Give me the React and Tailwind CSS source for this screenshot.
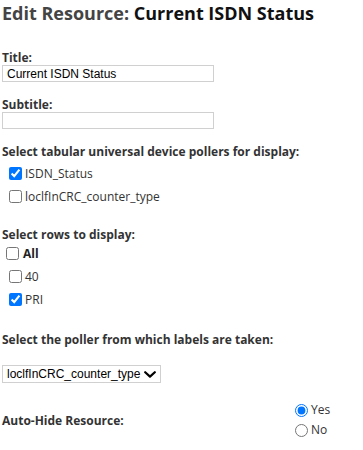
import React from "react";

function Chevron() {
  return (
    <svg width="12" height="7" viewBox="0 0 12 7" className="shrink-0">
      <path d="M1.2 1.2 L6 5.6 L10.8 1.2" fill="none" stroke="#000" strokeWidth="2.2" strokeLinecap="round" strokeLinejoin="round" />
    </svg>
  );
}

function Label({ children, className = "" }) {
  return (
    <div className={"text-[12px] leading-[15px] font-bold text-[#333] whitespace-nowrap " + className}>{children}</div>
  );
}

function CheckRow({ label, checked, bold, className = "" }) {
  return (
    <label className={"flex items-center h-[23px] " + className}>
      <input type="checkbox" defaultChecked={checked} className="w-[13px] h-[13px] shrink-0" />
      <span className={"text-[12px] leading-[16px] " + (bold ? "font-bold ml-[4px] text-[#222]" : "ml-[3px] text-[#333]")}>{label}</span>
    </label>
  );
}

export default function App() {
  return (
    <div className="w-[363px] h-[450px] bg-white px-[2px] pt-[1px] overflow-hidden" style={{ fontFamily: '"Open Sans", "Liberation Sans", sans-serif' }}>
      <h1 className="text-[18px] leading-[24px] font-bold whitespace-nowrap">
        <span className="text-[#444]">Edit Resource: </span>
        <span className="text-[#111]">Current ISDN Status</span>
      </h1>

      <Label className="mt-[25px]">Title:</Label>
      <input
        type="text"
        defaultValue="Current ISDN Status"
        className="block w-[212px] h-[17px] border border-[#d0d0d0] px-[4px] text-[12px] text-black outline-none"
        style={{ fontFamily: '"Liberation Sans", Arial, sans-serif' }}
      />

      <Label className="mt-[15px]">Subtitle:</Label>
      <input
        type="text"
        className="block w-[212px] h-[17px] border border-[#d0d0d0] px-[4px] text-[12px] text-black outline-none"
        style={{ fontFamily: '"Liberation Sans", Arial, sans-serif' }}
      />

      <Label className="mt-[15px]">Select tabular universal device pollers for display:</Label>
      <div className="mt-[3px] pl-[7px]">
        <CheckRow label="ISDN_Status" checked />
        <CheckRow label="loclfInCRC_counter_type" />
      </div>

      <Label className="mt-[19px]">Select rows to display:</Label>
      <div className="pl-[4px]">
        <CheckRow label="All" bold />
        <CheckRow label="40" className="pl-[3px]" />
        <CheckRow label="PRI" checked className="pl-[3px]" />
      </div>

      <Label className="mt-[21px]">Select the poller from which labels are taken:</Label>
      <div
        className="mt-[18px] flex items-center justify-between w-[159px] h-[18px] border border-[#d0d0d0] pl-[4px] pr-[4px] text-[12px] leading-[16px] text-black"
        style={{ fontFamily: '"Liberation Sans", Arial, sans-serif' }}
      >
        <span>loclfInCRC_counter_type</span>
        <Chevron />
      </div>

      <div className="mt-[17px] flex items-center">
        <Label className="w-[293px] shrink-0">Auto-Hide Resource:</Label>
        <div className="flex flex-col">
          <label className="flex items-center h-[20px]">
            <input type="radio" name="autohide" defaultChecked className="w-[13px] h-[13px]" />
            <span className="ml-[3px] text-[12px] leading-[16px] text-[#333]">Yes</span>
          </label>
          <label className="flex items-center h-[20px]">
            <input type="radio" name="autohide" className="w-[13px] h-[13px]" />
            <span className="ml-[3px] text-[12px] leading-[16px] text-[#333]">No</span>
          </label>
        </div>
      </div>
    </div>
  );
}
